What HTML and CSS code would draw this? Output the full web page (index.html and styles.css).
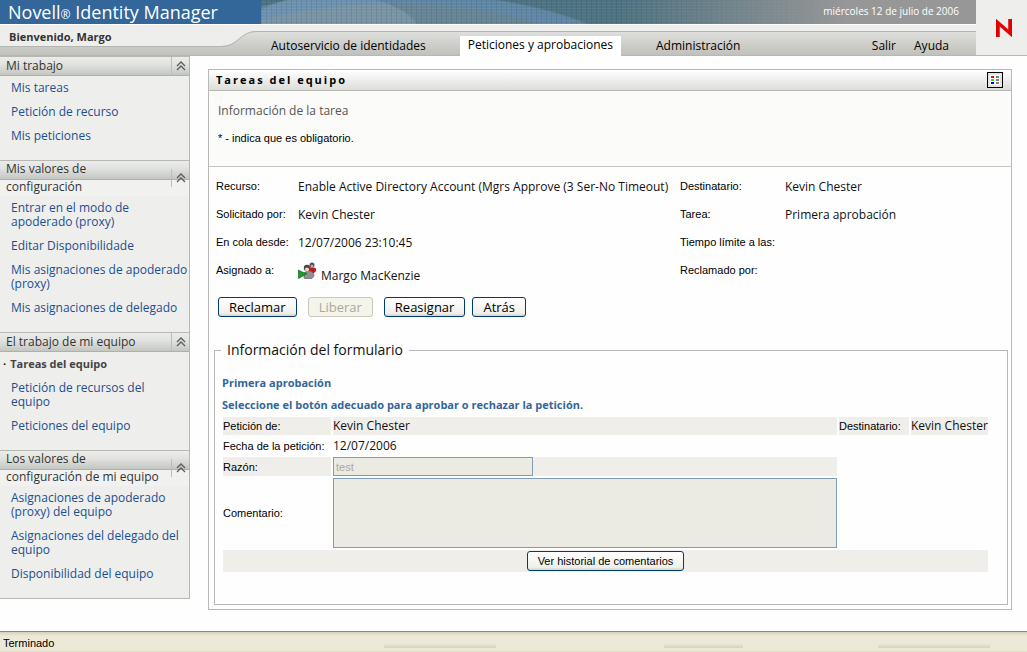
FILE: index.html
```html
<!DOCTYPE html>
<html lang="es">
<head>
<meta charset="utf-8">
<title>Novell Identity Manager</title>
<link rel="stylesheet" href="styles.css">
</head>
<body>
<svg class="defs" aria-hidden="true">
  <symbol id="chevrons" viewBox="0 0 10 10"><path d="M1 5 5 1l4 4M1 9l4-4 4 4" fill="none" stroke="#5c5c5c" stroke-width="1.3"/></symbol>
</svg>
<header class="masthead">
  <div class="masthead-main">
    <div class="banner">
      <h1 class="product">Novell<span class="reg">®</span> Identity Manager</h1>
      <div class="art"><span class="date">miércoles 12 de julio de 2006</span></div>
    </div>
    <div class="navbar">
      <div class="welcome">Bienvenido, Margo</div>
      <svg class="swoosh" viewBox="0 0 48 31" aria-hidden="true">
        <path d="M0 0H48V6H40C22 6 22 21 4 21H0Z" fill="#eeeeec"/>
        <path d="M0 21.5H4C22 21.5 22 6.500 40 6.500H48" fill="none" stroke="#b4b4b0"/>
      </svg>
      <nav class="tabs">
        <a class="tab" href="#">Autoservicio de identidades</a>
        <a class="tab current" href="#">Peticiones y aprobaciones</a>
        <a class="tab" href="#">Administración</a>
        <a class="tab session" href="#">Salir</a>
        <a class="tab help" href="#">Ayuda</a>
      </nav>
    </div>
  </div>
  <div class="brand">
    <svg class="brand-n" viewBox="0 0 16 18" role="img" aria-label="Novell"><path d="M0 0 12.500 11V0H16V18L3.500 7V18H0Z" fill="#e00000" stroke="#e00000" stroke-width=".5"/></svg>
  </div>
</header>

<div class="body">
  <aside class="sidebar">
    <section class="group">
      <div class="group-head"><h2>Mi trabajo</h2><button class="fold" type="button" aria-label="Contraer"><svg class="chev"><use href="#chevrons"/></svg></button></div>
      <ul class="links">
        <li><a href="#">Mis tareas</a></li>
        <li><a href="#">Petición de recurso</a></li>
        <li><a href="#">Mis peticiones</a></li>
      </ul>
    </section>
    <section class="group">
      <div class="group-head"><h2>Mis valores de configuración</h2><button class="fold" type="button" aria-label="Contraer"><svg class="chev"><use href="#chevrons"/></svg></button></div>
      <ul class="links">
        <li><a href="#">Entrar en el modo de apoderado (proxy)</a></li>
        <li><a href="#">Editar Disponibilidade</a></li>
        <li><a href="#">Mis asignaciones de apoderado (proxy)</a></li>
        <li><a href="#">Mis asignaciones de delegado</a></li>
      </ul>
    </section>
    <section class="group">
      <div class="group-head"><h2>El trabajo de mi equipo</h2><button class="fold" type="button" aria-label="Contraer"><svg class="chev"><use href="#chevrons"/></svg></button></div>
      <ul class="links team">
        <li class="active"><a href="#">Tareas del equipo</a></li>
        <li><a href="#">Petición de recursos del equipo</a></li>
        <li><a href="#">Peticiones del equipo</a></li>
      </ul>
    </section>
    <section class="group">
      <div class="group-head"><h2>Los valores de configuración de mi equipo</h2><button class="fold" type="button" aria-label="Contraer"><svg class="chev"><use href="#chevrons"/></svg></button></div>
      <ul class="links">
        <li><a href="#">Asignaciones de apoderado (proxy) del equipo</a></li>
        <li><a href="#">Asignaciones del delegado del equipo</a></li>
        <li><a href="#">Disponibilidad del equipo</a></li>
      </ul>
    </section>
  </aside>

  <main class="panel">
    <div class="panel-head">
      <h2>Tareas del equipo</h2>
      <button class="legend-btn" type="button" aria-label="Leyenda">
        <svg class="legend-icon" viewBox="0 0 14 14" aria-hidden="true">
          <path d="M2 2h10v10H2z" fill="#fff"/>
          <path d="M3 3h3v2H3z" fill="#f00"/><path d="M3 6h3v2H3z" fill="#0f0"/><path d="M3 9h3v2H3z" fill="#00f"/>
          <path d="M8 3h3v2H8zM8 6h3v2H8zM8 9h3v2H8z" fill="#808080"/>
        </svg>
      </button>
    </div>
    <div class="intro">
      <h3>Información de la tarea</h3>
      <p>* - indica que es obligatorio.</p>
    </div>
    <dl class="details">
      <dt>Recurso:</dt><dd>Enable Active Directory Account (Mgrs Approve (3 Ser-No Timeout)</dd>
      <dt>Destinatario:</dt><dd>Kevin Chester</dd>
      <dt>Solicitado por:</dt><dd>Kevin Chester</dd>
      <dt>Tarea:</dt><dd>Primera aprobación</dd>
      <dt>En cola desde:</dt><dd>12/07/2006 23:10:45</dd>
      <dt>Tiempo límite a las:</dt><dd></dd>
      <dt>Asignado a:</dt>
      <dd class="person">
        <svg class="people" viewBox="0 0 18 17" aria-hidden="true">
          <circle cx="14" cy="3" r="2.500" fill="#505050"/><circle cx="14" cy="4" r="1.300" fill="#d8a898"/>
          <path d="M10 6.500C11 5 17 5 18 6.500V9l-2 2h-5z" fill="#c8141c"/>
          <path d="M6 16V13C6 10 8 9 11 9s5 2 5 5l-2 2.500H7z" fill="#909090" stroke="#606060" stroke-width=".7"/>
          <circle cx="9" cy="6" r="3.200" fill="#444"/><circle cx="9" cy="7.500" r="2.100" fill="#f0d0c4"/>
          <path d="M.5 8 4 10l5 1.500-5 3L.5 16.500z" fill="#1c9a30" stroke="#0c6a1c" stroke-width=".7"/>
        </svg>
        <span>Margo MacKenzie</span>
      </dd>
      <dt>Reclamado por:</dt><dd></dd>
    </dl>
    <div class="actions">
      <button class="btn" type="button">Reclamar</button>
      <button class="btn" type="button" disabled>Liberar</button>
      <button class="btn" type="button">Reasignar</button>
      <button class="btn last" type="button">Atrás</button>
    </div>
    <fieldset class="form">
      <legend>Información del formulario</legend>
      <h4>Primera aprobación</h4>
      <h4>Seleccione el botón adecuado para aprobar o rechazar la petición.</h4>
      <table class="grid">
        <colgroup><col class="c-label"><col><col class="c-dest"><col class="c-name"></colgroup>
        <tr class="shade"><th scope="row">Petición de:</th><td>Kevin Chester</td><th scope="row">Destinatario:</th><td>Kevin Chester</td></tr>
        <tr><th scope="row">Fecha de la petición:</th><td>12/07/2006</td></tr>
        <tr class="shade"><th scope="row"><label for="reason">Razón:</label></th><td><input id="reason" class="field" type="text" value="test" disabled></td></tr>
        <tr><th scope="row"><label for="comment">Comentario:</label></th><td><textarea id="comment" class="area" disabled></textarea></td></tr>
        <tr class="shade"><td class="history" colspan="4"><button class="btn small" type="button">Ver historial de comentarios</button></td></tr>
      </table>
    </fieldset>
  </main>
</div>
<footer class="status">Terminado</footer>
</body>
</html>
```
FILE: styles.css
```css
* { box-sizing: border-box; }
body {
  margin: 0;
  min-height: 100vh;
  display: flex;
  flex-direction: column;
  background: #fefefe;
  color: #111;
  font: 12px/18px "Open Sans", "Noto Sans", sans-serif;
}
h1, h2, h3, h4, p, ul, dl, dd { margin: 0; padding: 0; font-size: inherit; font-weight: normal; }
button { font-family: inherit; color: inherit; }
.defs { display: none; }

.masthead { display: flex; }
.masthead-main { flex: 1; }
.banner { display: flex; height: 25px; border-bottom: 1px solid #fff; }
.product {
  width: 261px;
  padding-left: 8px;
  background: #336699;
  color: #fff;
  font-size: 18px;
  line-height: 24px;
  white-space: nowrap;
}
.reg { font-size: 12px; }
.art {
  flex: 1;
  padding-right: 17px;
  text-align: right;
  color: #fff;
  font-size: 10px;
  line-height: 22px;
  background:
    linear-gradient(90deg, transparent 50%, #979797 82%),
    repeating-linear-gradient(90deg, rgba(20,50,60,.12) 0 1px, transparent 1px 5px),
    repeating-linear-gradient(0deg, rgba(255,255,255,.06) 0 1px, transparent 1px 3px),
    radial-gradient(ellipse 240px 78px at 135px 70px, rgba(125,150,170,.5) 84%, rgba(105,145,185,.65) 86%, rgba(105,145,185,.6) 98%, transparent 100%),
    radial-gradient(ellipse 90px 40px at 70px 34px, #71919f 96%, transparent 100%),
    #4d7281;
}
.navbar {
  display: flex;
  height: 31px;
  border-bottom: 1px solid #b8b8b2;
  background: linear-gradient(#eeeeec 6px, #b4b4b0 6px, #b4b4b0 7px, #dededc 7px, #c0c1bc);
}
.welcome {
  width: 217px;
  height: 22px;
  padding-left: 9px;
  border-bottom: 1px solid #b4b4b0;
  background: #eeeeec;
  color: #333;
  font-size: 11px;
  font-weight: bold;
  line-height: 23px;
}
.swoosh { width: 48px; height: 31px; }
.tabs { flex: 1; display: flex; padding: 11px 27px 0 6px; }
.tab { color: #000; text-decoration: none; white-space: nowrap; line-height: 20px; }
.tab.current { margin: 0 35px 0 34px; padding: 0 8px; background: #fff; height: 20px; line-height: 18px; }
.session { margin-left: auto; }
.help { margin-left: 18px; }
.brand {
  width: 51px;
  display: flex;
  align-items: center;
  justify-content: center;
  padding-left: 4px;
  background: #eeeeec;
  border-bottom: 1px solid #b8b8b2;
}
.brand-n { width: 16px; height: 18px; }

.body { flex: 1; display: flex; align-items: flex-start; gap: 18px; padding-right: 15px; padding-bottom: 21px; }
.sidebar { width: 190px; flex: none; background: #eeeeed; border: solid #b8b8b2; border-width: 0 1px 1px 0; }
.group-head {
  display: flex;
  align-items: center;
  min-height: 20px;
  background: linear-gradient(#b8b8b2 1px, #ececea 1px, #e2e4e1 8px, #c3c6c1 19px, #b0b0aa 19px) no-repeat 0 0 / 100% 20px #f1f1f0;
}
.group-head h2 { flex: 1; padding: 0 10px 0 6px; color: #333; }
.fold { width: 18px; height: 18px; padding: 0; border: 0; border-left: 1px solid #bcbcb8; background: none; display: flex; align-items: center; justify-content: center; }
.chev { width: 10px; height: 10px; }
.links { list-style: none; padding: 5px 0 17px; display: grid; gap: 10px; line-height: 14px; }
.links.team { padding-right: 20px; }
.links li { padding-left: 11px; }
.links a { color: #1a5090; text-decoration: none; }
.links .active { padding-left: 3px; font-size: 11px; font-weight: bold; }
.links .active::before { content: "·"; margin-right: 4px; }
.links .active a { color: #444; }

.panel { flex: 1; min-width: 0; margin-top: 13px; padding-bottom: 4px; border: 1px solid #b8b8b8; }
.panel-head {
  display: flex;
  align-items: center;
  justify-content: space-between;
  height: 21px;
  padding: 0 8px 0 7px;
  border-bottom: 1px solid #b8b8b2;
  background: linear-gradient(#fff, #dcdedb);
}
.panel-head h2 { font-size: 11px; font-weight: bold; letter-spacing: 2px; color: #000; }
.legend-btn { width: 16px; height: 16px; padding: 0; border: 1px solid #000; background: #e4e4e0; }
.legend-icon { display: block; width: 14px; height: 14px; }
.intro { height: 76px; padding: 11px 9px; border-bottom: 1px solid #c4c4c0; background: #fbfbfa; }
.intro h3 { color: #555; }
.intro p { margin-top: 9px; color: #000; font: 11px/18px "Liberation Sans", Arial, sans-serif; }
.details {
  display: grid;
  grid-template-columns: 82px 382px 105px 1fr;
  grid-auto-rows: 28px;
  padding: 6px 0 0 7px;
  line-height: 28px;
  white-space: nowrap;
}
.details dt { color: #000; font: 11px/26px "Liberation Sans", Arial, sans-serif; }
.person { display: flex; gap: 5px; }
.people { width: 18px; height: 17px; margin-top: 5px; }
.person span { line-height: 38px; }
.actions { display: flex; gap: 11px; padding: 12px 9px 0; }
.btn {
  height: 20px;
  padding: 0 10px;
  border: 1px solid #003c74;
  border-radius: 3px;
  background: linear-gradient(#fff, #f0f0ea 85%, #d6d0c5);
  color: #000;
  font-size: 13px;
  line-height: 18px;
}
.btn:disabled { border-color: #c9c7ba; background: #f5f4ea; color: #aca899; }
.btn.last { margin-left: -4px; }
.btn.small { font: 11px/18px "Liberation Sans", Arial, sans-serif; }
.form { margin: 24px 3px 0 5px; padding: 13px 17px 30px 6px; border: 1px solid #b8b8b8; min-width: 0; }
.form legend { padding: 0 6px; font-size: 14px; line-height: 18px; }
.form h4 { padding-left: 1px; color: #336699; font-size: 11px; font-weight: bold; line-height: 22px; }
.grid { width: 100%; margin-top: -1px; table-layout: fixed; border-spacing: 2px; line-height: 18px; }
.grid th, .grid td { padding: 0; text-align: left; font-weight: normal; white-space: nowrap; }
.grid th { color: #000; font: 11px/18px "Liberation Sans", Arial, sans-serif; }
.c-label { width: 108px; }
.c-dest { width: 70px; }
.c-name { width: 77px; }
.shade th, .shade td { background: #efeeea; }
.field { display: block; width: 200px; height: 19px; padding: 0 2px; border: 1px solid #7f9db9; background: #ebebe4; color: #aca899; font: 11px "Liberation Sans", Arial, sans-serif; }
.area { display: block; width: 100%; height: 70px; resize: none; border: 1px solid #7f9db9; background: #ebebe4; }
.grid .history { padding: 1px 0; text-align: center; }
.history .btn { display: block; margin: 0 auto; }

.status {
  height: 22px;
  padding-left: 3px;
  border-top: 1px solid #8c8a80;
  background:
    linear-gradient(#e9e5d3, #d6d3be) no-repeat 42% 12px / 112px 4px,
    linear-gradient(#e9e5d3, #d6d3be) no-repeat 70% 12px / 79px 4px,
    linear-gradient(#e9e5d3, #d6d3be) no-repeat 96% 12px / 112px 4px,
    linear-gradient(#d4d1c0, #ece9d8 4px, #ece9d8 18px, #dcdabc);
  color: #000;
  font: 11px/22px "Liberation Sans", Arial, sans-serif;
}
```
